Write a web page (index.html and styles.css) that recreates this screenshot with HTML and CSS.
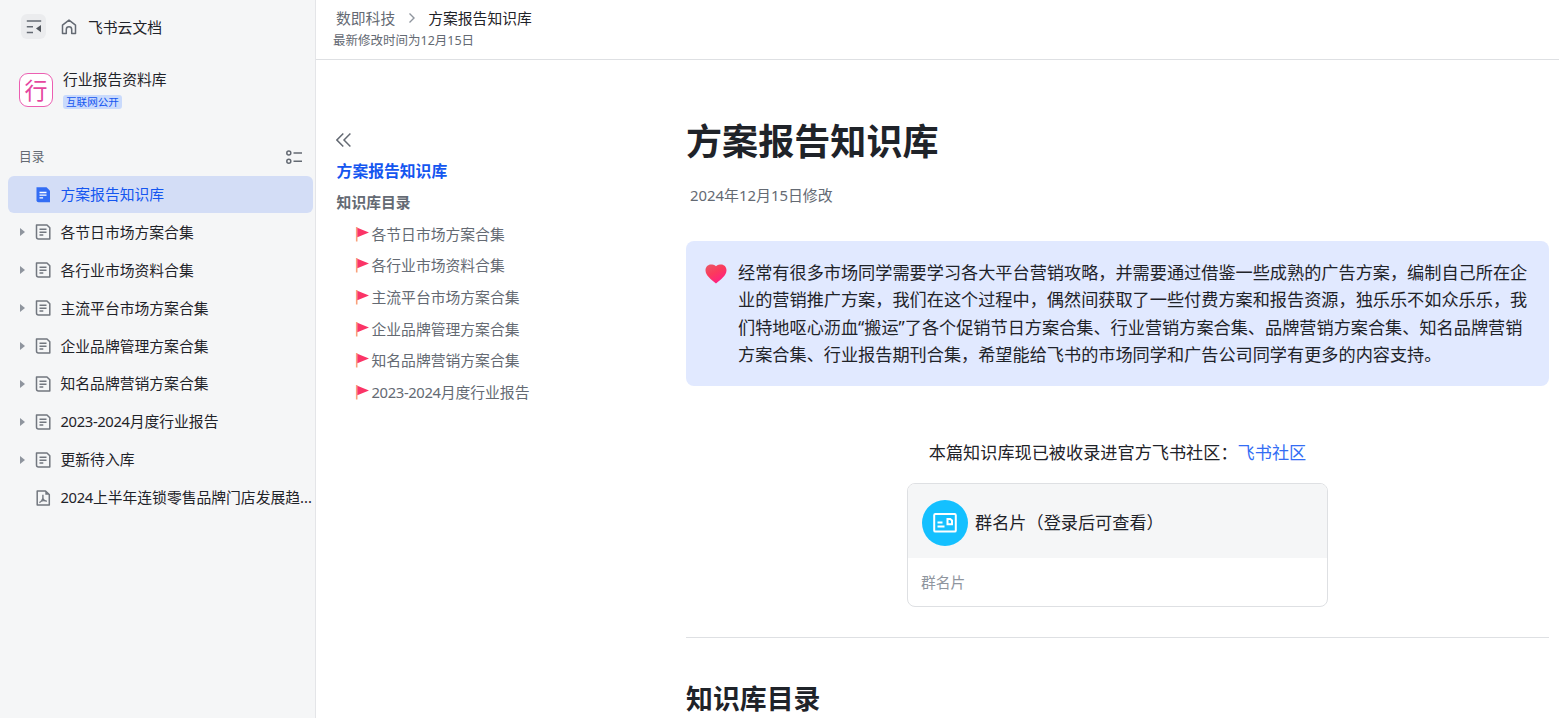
FILE: index.html
```html
<!DOCTYPE html>
<html lang="zh-CN">
<head>
    <meta charset="UTF-8">
    <meta name="viewport" content="width=device-width, initial-scale=1.0">
    <title>方案报告知识库</title>
    <link rel="stylesheet" href="styles.css">
</head>
<body>
    <!-- Shared icons -->
    <svg class="sprite" aria-hidden="true">
        <symbol id="icon-doc" viewBox="0 0 16 16">
            <path d="M1.500 1h10.500l2.800 2.800v11.200H3.500a2 2 0 0 1-2-2z" fill="none" stroke="currentColor" stroke-width="1.500" stroke-linejoin="round"/>
            <path d="M4.500 5.300h7M4.500 8.200h7M4.500 11.100h3.800" fill="none" stroke="currentColor" stroke-width="1.500"/>
        </symbol>
        <symbol id="icon-flag" viewBox="0 0 14 16">
            <path d="M1.700 1v14.500" stroke="#f9a07a" stroke-width="1.600"/>
            <path d="M2.300 1.800 14 6.500 2.300 11.300z" fill="#fb3467"/>
        </symbol>
    </svg>

    <div class="app">
        <aside class="sidebar">
            <div class="topbar">
                <button class="collapse-btn" aria-label="收起">
                    <svg width="16" height="16" viewBox="0 0 16 16">
                        <path d="M.8 2h14.400M.8 7.800h6.200M.8 13.500h6.200" stroke="#646a73" stroke-width="1.500"/>
                        <path d="M15 6v7.200L10 9.600z" fill="#51565d"/>
                    </svg>
                </button>
                <svg class="home" width="16" height="16" viewBox="0 0 16 16">
                    <path d="M1.500 6.200 8 1.100l6.500 5.100v8.300h-3.800V10.400a2.700 2.700 0 0 0-5.400 0v4.100H1.500z" fill="none" stroke="#646a73" stroke-width="1.500" stroke-linejoin="round"/>
                </svg>
                <span>飞书云文档</span>
            </div>

            <div class="space">
                <div class="space-logo">行</div>
                <div class="space-info">
                    <div class="space-name">行业报告资料库</div>
                    <span class="tag">互联网公开</span>
                </div>
            </div>

            <div class="catalog">
                <span>目录</span>
                <svg width="16" height="16" viewBox="0 0 16 16">
                    <g fill="none" stroke="#646a73" stroke-width="1.500">
                        <circle cx="2.800" cy="4" r="2"/>
                        <circle cx="2.800" cy="12.200" r="2"/>
                        <path d="M7.500 4H16M7.500 12.200H16"/>
                    </g>
                </svg>
            </div>

            <nav class="tree">
                <a class="node active">
                    <i class="arrow"></i>
                    <svg class="node-icon" viewBox="0 0 16 16">
                        <path d="M1.500.3h10L15 3.800v11.500H3.500a2 2 0 0 1-2-2z" fill="#336df4"/>
                        <path d="M4.500 5.500h7M4.500 8.200h7M4.500 10.900h3.600" stroke="#fff" stroke-width="1.300"/>
                    </svg>
                    <span>方案报告知识库</span>
                </a>
                <a class="node has-children"><i class="arrow"></i><svg class="node-icon"><use href="#icon-doc"/></svg><span>各节日市场方案合集</span></a>
                <a class="node has-children"><i class="arrow"></i><svg class="node-icon"><use href="#icon-doc"/></svg><span>各行业市场资料合集</span></a>
                <a class="node has-children"><i class="arrow"></i><svg class="node-icon"><use href="#icon-doc"/></svg><span>主流平台市场方案合集</span></a>
                <a class="node has-children"><i class="arrow"></i><svg class="node-icon"><use href="#icon-doc"/></svg><span>企业品牌管理方案合集</span></a>
                <a class="node has-children"><i class="arrow"></i><svg class="node-icon"><use href="#icon-doc"/></svg><span>知名品牌营销方案合集</span></a>
                <a class="node has-children"><i class="arrow"></i><svg class="node-icon"><use href="#icon-doc"/></svg><span><b class="num">2023-2024</b>月度行业报告</span></a>
                <a class="node has-children"><i class="arrow"></i><svg class="node-icon"><use href="#icon-doc"/></svg><span>更新待入库</span></a>
                <a class="node">
                    <i class="arrow"></i>
                    <svg class="node-icon" viewBox="0 0 16 16">
                        <path d="M2.200 1h8.300L14.300 4.500V15H2.200z" fill="none" stroke="currentColor" stroke-width="1.500" stroke-linejoin="round"/>
                        <path d="M10.300 1v3.700h4z" fill="currentColor"/>
                        <path d="M7.900 4.800v3.600c-.5 1.700-1.600 3.300-3.500 4.300M7.900 8.400c.6 1.500 1.800 2.600 3.900 2.900M5.700 11.300c1.500-.7 3-.9 4.600-.5" fill="none" stroke="currentColor" stroke-width="1.400"/>
                    </svg>
                    <span><b class="num">2024</b>上半年连锁零售品牌门店发展趋...</span>
                </a>
            </nav>
        </aside>

        <main class="main">
            <header class="header">
                <div class="breadcrumb">
                    <span class="parent">数即科技</span>
                    <svg width="8" height="12" viewBox="0 0 8 12"><path d="M1.500 1.500 6 6l-4.500 4.500" fill="none" stroke="#8f959e" stroke-width="1.400"/></svg>
                    <span>方案报告知识库</span>
                </div>
                <div class="modified">最新修改时间为12月15日</div>
            </header>

            <div class="content">
                <nav class="toc">
                    <svg class="toc-toggle" width="16" height="16" viewBox="0 0 16 16">
                        <path d="M7.300 1.500.9 8l6.400 6.500M14.400 1.500 8 8l6.400 6.500" fill="none" stroke="#646a73" stroke-width="1.500"/>
                    </svg>
                    <a class="toc-title">方案报告知识库</a>
                    <a class="toc-heading">知识库目录</a>
                    <a class="toc-item"><svg class="flag"><use href="#icon-flag"/></svg>各节日市场方案合集</a>
                    <a class="toc-item"><svg class="flag"><use href="#icon-flag"/></svg>各行业市场资料合集</a>
                    <a class="toc-item"><svg class="flag"><use href="#icon-flag"/></svg>主流平台市场方案合集</a>
                    <a class="toc-item"><svg class="flag"><use href="#icon-flag"/></svg>企业品牌管理方案合集</a>
                    <a class="toc-item"><svg class="flag"><use href="#icon-flag"/></svg>知名品牌营销方案合集</a>
                    <a class="toc-item"><svg class="flag"><use href="#icon-flag"/></svg><b class="num">2023-2024</b>月度行业报告</a>
                </nav>

                <article class="doc">
                    <h1>方案报告知识库</h1>
                    <div class="doc-date">2024年12月15日修改</div>

                    <div class="callout">
                        <svg class="heart" width="22" height="20" viewBox="0 0 22 20">
                            <defs>
                                <linearGradient id="heartFill" x1="0" y1="0" x2=".6" y2="1">
                                    <stop offset="0" stop-color="#e85a68"/>
                                    <stop offset=".5" stop-color="#fb3a5c"/>
                                    <stop offset="1" stop-color="#ff1f84"/>
                                </linearGradient>
                            </defs>
                            <path d="M11 2.200C9.300.8 7.500.5 5.900.5 3 .5.500 2.800.500 6.300c0 5.200 5.700 9.200 10.500 13.200 4.800-4 10.500-8 10.500-13.200C21.500 2.800 19 .5 16.100.5 14.500.5 12.700.8 11 2.200z" fill="url(#heartFill)"/>
                        </svg>
                        <p>经常有很多市场同学需要学习各大平台营销攻略，并需要通过借鉴一些成熟的广告方案，编制自己所在企业的营销推广方案，我们在这个过程中，偶然间获取了一些付费方案和报告资源，独乐乐不如众乐乐，我们特地呕心沥血“搬运”了各个促销节日方案合集、行业营销方案合集、品牌营销方案合集、知名品牌营销方案合集、行业报告期刊合集，希望能给飞书的市场同学和广告公司同学有更多的内容支持。</p>
                    </div>

                    <p class="community">本篇知识库现已被收录进官方飞书社区：<a>飞书社区</a></p>

                    <div class="card">
                        <div class="card-head">
                            <div class="card-icon">
                                <svg width="24" height="20" viewBox="0 0 24 20">
                                    <g fill="none" stroke="#fff" stroke-width="2">
                                        <rect x="1.200" y="1" width="21.600" height="17.600" rx="1.200"/>
                                        <path d="M4.500 9.500h5M4.500 13.500h7"/>
                                        <path d="M14.500 6h2.800l1.700 1.500v3.700h-4.500z"/>
                                    </g>
                                </svg>
                            </div>
                            <span>群名片（登录后可查看）</span>
                        </div>
                        <div class="card-foot">群名片</div>
                    </div>

                    <hr>
                    <h2>知识库目录</h2>
                </article>
            </div>
        </main>
    </div>
</body>
</html>
```

FILE: styles.css
```css
* {
    box-sizing: border-box;
}
body {
    margin: 0;
    font-family: "Noto Sans", "Noto Sans CJK SC", sans-serif;
    font-size: 14.8px;
    line-height: 20px;
    color: #1f2329;
    background-color: #fff;
    text-spacing-trim: space-all;
    overflow: hidden;
}
svg {
    display: block;
    flex: none;
}
.sprite {
    position: absolute;
    width: 0;
    height: 0;
}
.num {
    font-weight: inherit;
    letter-spacing: -0.025em;
}
.app {
    display: flex;
    height: 718px;
}

/* Sidebar */
.sidebar {
    width: 316px;
    flex: none;
    background-color: #f5f6f7;
    border-right: 1px solid #e4e5e8;
    white-space: nowrap;
}
.topbar {
    display: flex;
    align-items: center;
    padding: 14px 0 0 21px;
}
.collapse-btn {
    width: 25px;
    height: 25px;
    padding: 0;
    border: none;
    border-radius: 6px;
    background-color: #ebecee;
    display: flex;
    align-items: center;
    justify-content: center;
}
.home {
    margin: 0 11px 0 15px;
}
.space {
    display: flex;
    gap: 10px;
    padding: 30px 0 0 19px;
}
.space-logo {
    width: 34px;
    height: 34px;
    margin-top: 4px;
    border: 1px solid #ec5fb2;
    border-radius: 9px;
    background-color: #fff;
    color: #e5479f;
    font-size: 23px;
    line-height: 32px;
    text-align: center;
}
.space-info {
    display: flex;
    flex-direction: column;
    align-items: flex-start;
}
.tag {
    margin-top: 6px;
    padding: 0 3px;
    border-radius: 3px;
    background-color: #c9dafc;
    color: #1456f0;
    font-size: 10.6px;
    line-height: 14px;
}
.catalog {
    display: flex;
    justify-content: space-between;
    align-items: center;
    padding: 37px 13px 10px 19px;
    font-size: 12.7px;
    color: #646a73;
}
.catalog svg {
    margin-top: 1px;
}
.tree {
    display: flex;
    flex-direction: column;
    gap: 0.9px;
    padding: 0 2px 0 8px;
}
.node {
    display: flex;
    align-items: center;
    height: 37px;
    padding-left: 12px;
    border-radius: 6px;
}
.node span {
    margin-top: -1px;
}
.node.active {
    background-color: #d3ddf6;
    color: #1456f0;
}
.arrow {
    width: 5px;
    margin-right: 10px;
}
.has-children .arrow {
    border: 4px solid transparent;
    border-left: 5px solid #8f959e;
    border-right: 0;
}
.node-icon {
    width: 16px;
    height: 16px;
    margin-right: 9.5px;
    color: #72777f;
}

/* Header */
.main {
    flex: 1;
    min-width: 0;
}
.header {
    height: 60px;
    padding: 8px 0 0 17px;
    border-bottom: 1px solid #dee0e3;
}
.breadcrumb {
    display: flex;
    align-items: center;
    gap: 12.5px;
    padding-left: 3px;
}
.parent {
    color: #646a73;
}
.modified {
    margin-top: 3px;
    font-size: 12.5px;
    color: #646a73;
}

/* Outline */
.content {
    display: flex;
}
.toc {
    display: flex;
    flex-direction: column;
    width: 370px;
    flex: none;
    padding: 72px 0 0 20px;
    color: #646a73;
}
.toc-title,
.toc-heading {
    padding-left: 0.6px;
    font-weight: 600;
}
.toc-title {
    margin: 13px 0 11px;
    font-size: 15.8px;
    color: #1456f0;
}
.toc-heading {
    margin-bottom: 6px;
}
.toc-item {
    display: flex;
    align-items: center;
    height: 31.6px;
    padding-left: 19px;
}
.flag {
    width: 14px;
    height: 16px;
    margin-right: 2.5px;
}

/* Document */
.doc {
    width: 863px;
    font-size: 17.16px;
}
h1 {
    margin: 56px 0 0;
    font-size: 36.1px;
    line-height: 50px;
}
.doc-date {
    margin: 19px 0 36px 4px;
    font-size: 14.9px;
    color: #646a73;
}
.callout {
    display: flex;
    height: 145px;
    padding: 18px 18px 0;
    border-radius: 8px;
    background-color: #e1e9ff;
}
.heart {
    margin: 5px 11.500px 0 0.500px;
}
.callout p {
    margin: 0;
    line-height: 27.4px;
}
.community {
    margin: 53px 0 0;
    line-height: 27px;
    text-align: center;
}
.community a {
    color: #336df4;
}
.card {
    width: 421px;
    height: 124px;
    margin: 17px auto 0;
    border: 1px solid #dee0e3;
    border-radius: 8px;
    overflow: hidden;
}
.card-head {
    display: flex;
    align-items: center;
    height: 74px;
    padding: 4px 14px 0;
    gap: 7px;
    background-color: #f5f6f7;
}
.card-head span {
    margin-top: -1px;
}
.card-icon {
    width: 46px;
    height: 46px;
    border-radius: 50%;
    background-color: #14c0ff;
    display: flex;
    align-items: center;
    justify-content: center;
}
.card-foot {
    padding: 14px 13px;
    font-size: 14.8px;
    color: #8f959e;
}
hr {
    margin: 30px 0 0;
    border: none;
    border-top: 1px solid #dee0e3;
}
h2 {
    margin: 41px 0 0;
    font-size: 26.9px;
    line-height: 40px;
}
```
